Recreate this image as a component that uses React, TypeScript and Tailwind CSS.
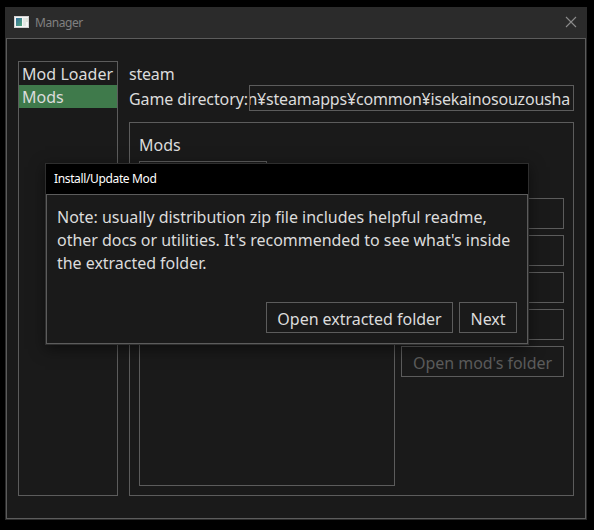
import type { ReactNode } from "react";

function Button({ children, className = "" }: { children?: ReactNode; className?: string }) {
  return (
    <button className={`flex h-[31px] items-center justify-center border border-[#5c5c5c] pt-0.5 whitespace-nowrap ${className}`}>
      {children}
    </button>
  );
}

function AppIcon() {
  return (
    <svg width="15" height="12" viewBox="0 0 15 12" shapeRendering="crispEdges" className="-mt-0.5">
      <defs>
        <linearGradient id="pane" x1="0" y1="0" x2="1" y2="1">
          <stop offset="0" stopColor="#356f9c" />
          <stop offset="1" stopColor="#53a77c" />
        </linearGradient>
      </defs>
      <rect width="15" height="12" fill="#d2d2d2" />
      <rect x="1" y="1" width="13" height="10" fill="#f6f6f6" />
      <rect x="2" y="2" width="6" height="8" fill="url(#pane)" />
      <rect x="9" y="2" width="3" height="8" fill="#e3e8e4" />
      <rect x="12" y="2" width="2" height="4" fill="#e1e5dc" />
    </svg>
  );
}

function Dialog() {
  return (
    <div className="absolute left-[45px] top-[163px] h-[182px] w-[484px] border border-[#2e2e2e] bg-black shadow-[0_4px_14px_rgba(0,0,0,0.5)]">
      <div className="flex h-[30px] items-center pl-2 text-[12px] tracking-[-0.36px] text-white">
        Install/Update Mod
      </div>
      <div className="flex h-[150px] flex-col justify-between border border-[#5c5c5c] bg-[#1a1a1a] p-2.5">
        <p className="whitespace-nowrap pt-px leading-[23px]">
          Note: usually distribution zip file includes helpful readme,
          <br />
          other docs or utilities. It's recommended to see what's inside
          <br />
          the extracted folder.
        </p>
        <div className="flex justify-end gap-1.5">
          <Button className="w-[187px]">Open extracted folder</Button>
          <Button className="w-[58px]">Next</Button>
        </div>
      </div>
    </div>
  );
}

export default function App() {
  return (
    <div className="relative h-[530px] w-[594px] overflow-hidden bg-black pl-[5px] pt-[7px] font-['Noto_Sans','Noto_Sans_CJK_JP',sans-serif] text-[16px] tracking-[-0.03px] text-[#dcdcdc]">
      <div className="flex h-[513px] w-[582px] flex-col bg-[#2b2b2b] px-px pb-px">
        <header className="flex h-[31px] shrink-0 items-center pl-2 pr-[9px] text-[12px] text-[#808080]">
          <AppIcon />
          <span className="ml-[6px] grow tracking-[-0.45px]">Manager</span>
          <svg width="12" height="12" viewBox="0 0 12 12" fill="none" stroke="#8c8c8c" strokeWidth="1.1" className="-mt-0.5">
            <path d="M1 1l10 10M11 1L1 11" />
          </svg>
        </header>
        <main className="flex grow gap-[11px] border border-[#5c5c5c] bg-[#1a1a1a] px-[11px] pb-[22px] pt-[22px]">
          <nav className="w-[100px] shrink-0 whitespace-nowrap border border-[#5c5c5c] leading-[25px]">
            <div className="h-[23px] pl-[3px] tracking-[0.05px]">Mod Loader</div>
            <div className="h-[23px] bg-[#3f7a4b] pl-[3px]">Mods</div>
          </nav>
          <div className="flex w-[445px] flex-col">
            <div className="h-6 leading-[26px] tracking-[-0.2px]">steam</div>
            <div className="flex h-[26px] leading-[28px]">
              <label className="w-[120px] shrink-0 whitespace-nowrap tracking-[-0.08px]">Game directory:</label>
              <div className="flex w-[325px] justify-end overflow-hidden whitespace-nowrap border border-[#5c5c5c] pr-[3px] leading-[26px] tracking-[-0.2px]">
                n¥steamapps¥common¥isekainosouzousha
              </div>
            </div>
            <section className="mt-[11px] flex grow flex-col border border-[#5c5c5c] px-[9px] pb-[9px] pt-[10px]">
              <h2 className="h-7 leading-[25px]">Mods</h2>
              <Button className="w-[128px] shrink-0" />
              <div className="mt-1.5 flex grow gap-1.5">
                <div className="w-[256px] border border-[#5c5c5c]" />
                <div className="flex w-[163px] flex-col gap-1.5">
                  <Button />
                  <Button />
                  <Button />
                  <Button />
                  <Button className="text-[#5c5c5c]">Open mod's folder</Button>
                </div>
              </div>
            </section>
          </div>
        </main>
      </div>
      <Dialog />
    </div>
  );
}
